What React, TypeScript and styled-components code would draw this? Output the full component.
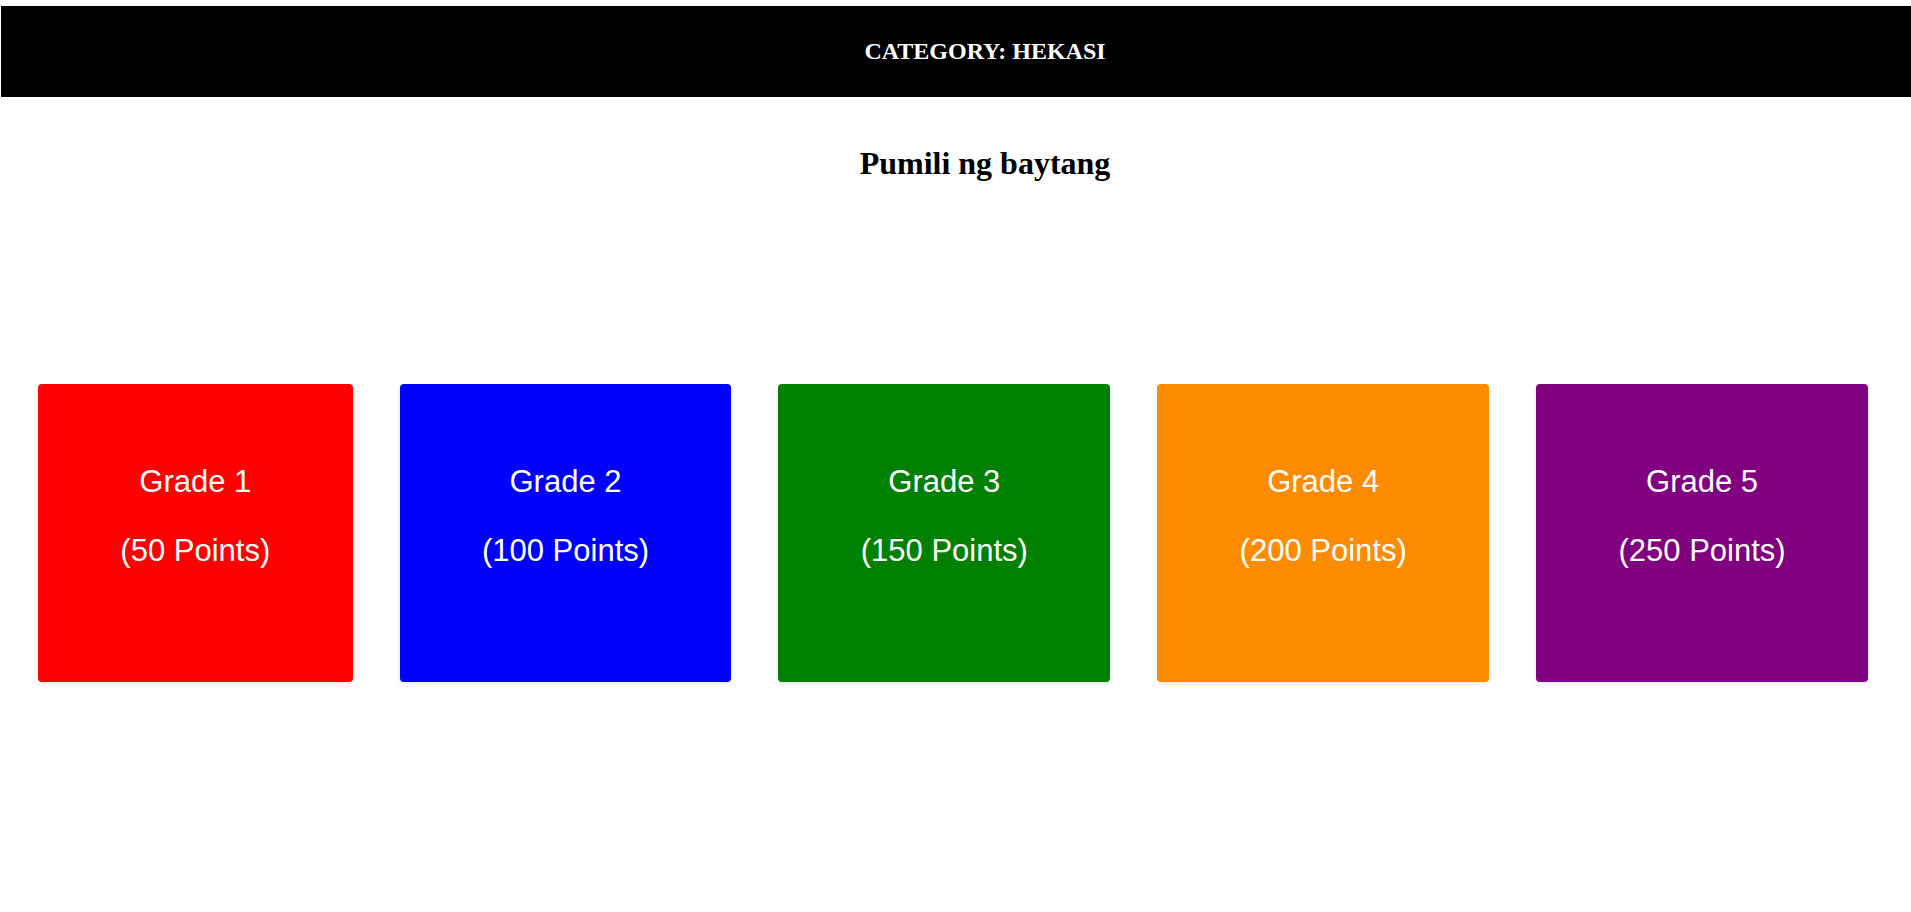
import React from 'react'
import styled, { createGlobalStyle } from 'styled-components'

const GlobalStyle = createGlobalStyle`
  html, body {
    margin: 0;
    padding: 0;
    background: #ffffff;
    overflow-x: hidden;
  }
  body {
    font-family: 'Liberation Serif', 'Times New Roman', serif;
  }
`

interface Grade {
  label: string
  points: number
  color: string
}

const grades: Grade[] = [
  { label: 'Grade 1', points: 50, color: '#ff0000' },
  { label: 'Grade 2', points: 100, color: '#0000ff' },
  { label: 'Grade 3', points: 150, color: '#008000' },
  { label: 'Grade 4', points: 200, color: '#ff8c00' },
  { label: 'Grade 5', points: 250, color: '#800080' },
]

export default function App() {
  return (
    <Page>
      <GlobalStyle />
      <Header>
        <HeaderTitle>CATEGORY: HEKASI</HeaderTitle>
      </Header>
      <Prompt>Pumili ng baytang</Prompt>
      <GradeRow>
        {grades.map((g) => (
          <GradeCard key={g.label} $color={g.color}>
            {g.label}
            <br />
            <br />
            ({g.points} Points)
          </GradeCard>
        ))}
      </GradeRow>
    </Page>
  )
}

const Page = styled.div`
  min-height: 912px;
  padding-top: 6px;
  box-sizing: border-box;
`

const Header = styled.header`
  margin-left: 1px;
  background: #000000;
  padding: 32px 0 32px 58px;
  text-align: center;
`

const HeaderTitle = styled.h3`
  margin: 0;
  color: #ffffff;
  font-family: 'Liberation Serif', 'Times New Roman', serif;
  font-weight: bold;
  font-size: 24px;
  line-height: 27px;
`

const Prompt = styled.h2`
  margin: 48px 0 0;
  padding-left: 59px;
  text-align: center;
  color: #000000;
  font-family: 'Liberation Serif', 'Times New Roman', serif;
  font-weight: bold;
  font-size: 32px;
  line-height: 1.15;
`

const GradeRow = styled.div`
  display: flex;
  gap: 47px;
  padding: 0 43px 0 38px;
  margin-top: 202px;
`

const GradeCard = styled.div<{ $color: string }>`
  flex: 1 1 auto;
  height: 298px;
  box-sizing: border-box;
  padding-top: 81px;
  background: ${(p) => p.$color};
  color: #ffffff;
  border-radius: 4px;
  box-shadow: 0 2px 4px rgba(0, 0, 0, 0.1);
  font-family: 'Liberation Sans', Arial, sans-serif;
  font-size: 31px;
  line-height: 34.5px;
  text-align: center;
  cursor: pointer;
`
